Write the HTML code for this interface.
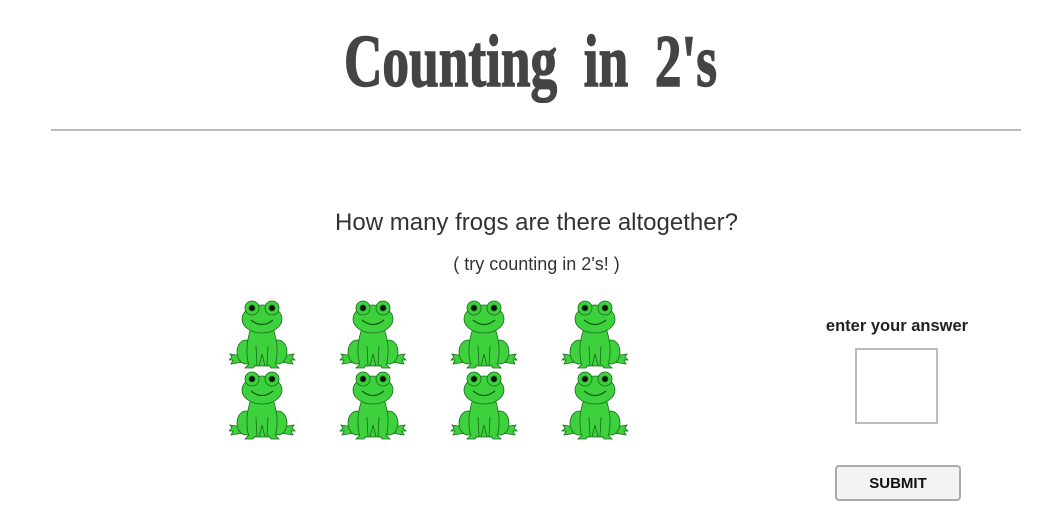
<!DOCTYPE html>
<html><head><style>
body{margin:0;width:1061px;height:530px;background:#fff;font-family:"Liberation Sans",sans-serif;position:relative;overflow:hidden}
.t{position:absolute;left:0;width:1061px;text-align:center}
</style></head><body>
<svg width="0" height="0" style="position:absolute"><defs>
<g id="f" stroke="#1a6a1a" stroke-width="0.8" fill="#3dd13d">
<path d="M14 58 L1 56 L3 59 L0 62 L4 62 L2 66 L14 64 Z"/>
<path d="M52 58 L65 56 L63 59 L66 62 L62 62 L64 66 L52 64 Z"/>
<ellipse cx="17" cy="54" rx="9" ry="12"/>
<ellipse cx="49" cy="54" rx="9" ry="12"/>
<path d="M22 30 Q15 50 20 68 L46 68 Q51 50 44 30 Z"/>
<path d="M20 66 L16 70 L24 70 L26 67 M46 66 L50 70 L42 70 L40 67"/>
<path d="M27 48 L28 68 M39 48 L38 68 M30 68 L33 56 L36 68" fill="none"/>
<ellipse cx="33" cy="21" rx="20" ry="14"/>
<circle cx="23" cy="10" r="7"/><circle cx="43" cy="10" r="7"/>
<circle cx="23" cy="10" r="3" fill="#111"/><circle cx="43" cy="10" r="3" fill="#111"/>
<path d="M22 22 Q33 31 44 22" fill="none" stroke="#135c13" stroke-width="1.2"/>
</g></defs></svg>
<div class="t" style="top:20px;font-family:'Liberation Serif',serif;font-weight:bold;font-size:74px;color:#444;transform:scaleX(0.72);-webkit-text-stroke:1.5px #444">Counting &nbsp;in &nbsp;2's</div>
<div style="position:absolute;left:51px;top:129px;width:970px;height:2px;background:#bbb"></div>
<div class="t" style="top:209px;font-size:24px;color:#333;left:6px">How many frogs are there altogether?</div>
<div class="t" style="top:254px;font-size:18px;color:#333;left:6px">( try counting in 2's! )</div>
<svg style="position:absolute;left:229px;top:298px" width="410" height="145">
<use href="#f" x="0" y="0"/><use href="#f" x="111" y="0"/><use href="#f" x="222" y="0"/><use href="#f" x="333" y="0"/>
<use href="#f" x="0" y="71"/><use href="#f" x="111" y="71"/><use href="#f" x="222" y="71"/><use href="#f" x="333" y="71"/>
</svg>
<div style="position:absolute;left:797px;width:200px;top:317px;text-align:center;font-weight:bold;font-size:16.5px;color:#222">enter your answer</div>
<div style="position:absolute;left:855px;top:348px;border:2px solid #bbb;width:79px;height:72px"></div>
<div style="position:absolute;left:835px;top:465px;width:122px;height:32px;border:2px solid #aaa;border-radius:4px;background:#f3f3f3;text-align:center;line-height:33px;font-weight:bold;font-size:15px;color:#111">SUBMIT</div>
</body></html>
